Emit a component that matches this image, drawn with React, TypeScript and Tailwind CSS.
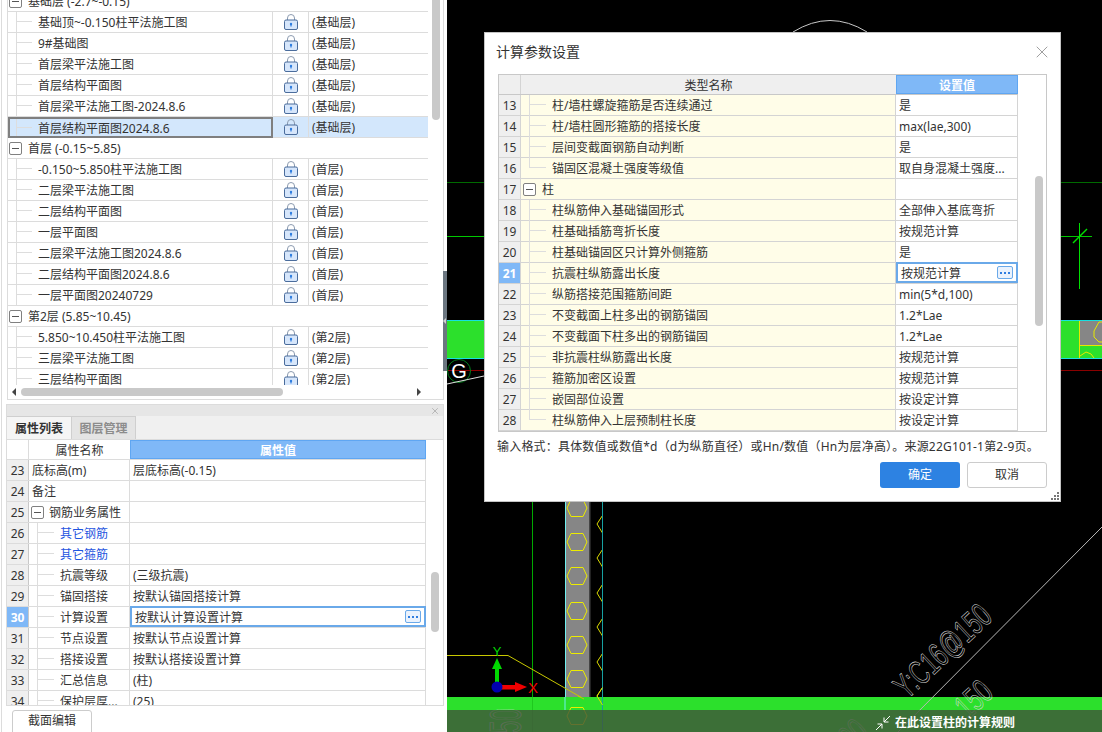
import { X } from 'lucide-react'

const treeRows: { name: string; layer?: string; group?: boolean; selected?: boolean }[] = [
  { name: '基础层 (-2.7~-0.15)', group: true },
  { name: '基础顶~-0.150柱平法施工图', layer: '(基础层)' },
  { name: '9#基础图', layer: '(基础层)' },
  { name: '首层梁平法施工图', layer: '(基础层)' },
  { name: '首层结构平面图', layer: '(基础层)' },
  { name: '首层梁平法施工图-2024.8.6', layer: '(基础层)' },
  { name: '首层结构平面图2024.8.6', layer: '(基础层)', selected: true },
  { name: '首层 (-0.15~5.85)', group: true },
  { name: '-0.150~5.850柱平法施工图', layer: '(首层)' },
  { name: '二层梁平法施工图', layer: '(首层)' },
  { name: '二层结构平面图', layer: '(首层)' },
  { name: '一层平面图', layer: '(首层)' },
  { name: '二层梁平法施工图2024.8.6', layer: '(首层)' },
  { name: '二层结构平面图2024.8.6', layer: '(首层)' },
  { name: '一层平面图20240729', layer: '(首层)' },
  { name: '第2层 (5.85~10.45)', group: true },
  { name: '5.850~10.450柱平法施工图', layer: '(第2层)' },
  { name: '三层梁平法施工图', layer: '(第2层)' },
  { name: '三层结构平面图', layer: '(第2层)' },
]

const propRows: { no: number; name: string; value?: string; kind?: 'plain' | 'group' | 'blue' | 'child' }[] = [
  { no: 23, name: '底标高(m)', value: '层底标高(-0.15)', kind: 'plain' },
  { no: 24, name: '备注', kind: 'plain' },
  { no: 25, name: '钢筋业务属性', kind: 'group' },
  { no: 26, name: '其它钢筋', kind: 'blue' },
  { no: 27, name: '其它箍筋', kind: 'blue' },
  { no: 28, name: '抗震等级', value: '(三级抗震)' },
  { no: 29, name: '锚固搭接', value: '按默认锚固搭接计算' },
  { no: 30, name: '计算设置', value: '按默认计算设置计算' },
  { no: 31, name: '节点设置', value: '按默认节点设置计算' },
  { no: 32, name: '搭接设置', value: '按默认搭接设置计算' },
  { no: 33, name: '汇总信息', value: '(柱)' },
  { no: 34, name: '保护层厚...', value: '(25)' },
]

const paramRows: { no: number; name: string; value?: string; group?: boolean; last?: boolean }[] = [
  { no: 13, name: '柱/墙柱螺旋箍筋是否连续通过', value: '是' },
  { no: 14, name: '柱/墙柱圆形箍筋的搭接长度', value: 'max(lae,300)' },
  { no: 15, name: '层间变截面钢筋自动判断', value: '是' },
  { no: 16, name: '锚固区混凝土强度等级值', value: '取自身混凝土强度...', last: true },
  { no: 17, name: '柱', group: true },
  { no: 18, name: '柱纵筋伸入基础锚固形式', value: '全部伸入基底弯折' },
  { no: 19, name: '柱基础插筋弯折长度', value: '按规范计算' },
  { no: 20, name: '柱基础锚固区只计算外侧箍筋', value: '是' },
  { no: 21, name: '抗震柱纵筋露出长度', value: '按规范计算' },
  { no: 22, name: '纵筋搭接范围箍筋间距', value: 'min(5*d,100)' },
  { no: 23, name: '不变截面上柱多出的钢筋锚固', value: '1.2*Lae' },
  { no: 24, name: '不变截面下柱多出的钢筋锚固', value: '1.2*Lae' },
  { no: 25, name: '非抗震柱纵筋露出长度', value: '按规范计算' },
  { no: 26, name: '箍筋加密区设置', value: '按规范计算' },
  { no: 27, name: '嵌固部位设置', value: '按设定计算' },
  { no: 28, name: '柱纵筋伸入上层预制柱长度', value: '按设定计算', last: true },
]

function LockIcon() {
  return (
    <svg viewBox="0 0 14 16" className="w-[14px] h-[16px]">
      <path d="M3.5 6.5V4a3.5 3.5 0 0 1 7 0v2.5" fill="none" stroke="#8c9bb0" strokeWidth="1" />
      <rect x="0.5" y="6" width="13" height="9.5" rx="1.5" fill="#d6e6fb" stroke="#4a6c9c" />
      <circle cx="7" cy="10" r="1.2" fill="#2f7de0" />
      <rect x="6.4" y="10" width="1.2" height="2.5" fill="#2f7de0" />
    </svg>
  )
}

function MinusBox() {
  return (
    <span className="flex items-center justify-center w-[13px] h-[13px] border border-[#808080] rounded-[2px] bg-white shrink-0">
      <span className="w-[7px] h-px bg-[#555]" />
    </span>
  )
}

function MoreButton() {
  return (
    <span className="flex items-center justify-center gap-[2px] w-[16px] h-[13px] border border-[#6aa9e9] bg-[#eaf2fd] rounded-[2px] shrink-0">
      <span className="w-[2px] h-[2px] bg-[#2f7de0]" />
      <span className="w-[2px] h-[2px] bg-[#2f7de0]" />
      <span className="w-[2px] h-[2px] bg-[#2f7de0]" />
    </span>
  )
}

function Connector({ width, last }: { width: string; last?: boolean }) {
  return (
    <span className={`flex self-stretch shrink-0 ${width}`}>
      <span className={`w-px bg-[#dddddd] ${last ? 'h-1/2' : 'h-full'}`} />
      <span className="flex-1 h-1/2 border-b border-[#dddddd]" />
    </span>
  )
}

function TreeRow({ row }: { row: (typeof treeRows)[number] }) {
  if (row.group) {
    return (
      <div className="flex items-center h-[21px] border-b border-[#dcdcdc] pl-[1px] gap-[6px]">
        <MinusBox />
        <span className="pt-[2px]">{row.name}</span>
      </div>
    )
  }
  return (
    <div className="flex h-[21px] border-b border-[#dcdcdc]">
      <div
        className={`flex items-center w-[265px] shrink-0 ${
          row.selected ? 'pl-[6px] bg-[#d3e7fc] border-2 border-[#7f7f7f] h-[21px]' : 'pl-[8px] border-r border-[#dcdcdc]'
        }`}
      >
        <Connector width="w-[16px]" />
        <span className="ml-[6px] pt-[2px]">{row.name}</span>
      </div>
      <div
        className={`flex items-center justify-center w-[36px] shrink-0 border-r border-[#dcdcdc] ${
          row.selected ? 'bg-[#d3e7fc]' : ''
        }`}
      >
        <LockIcon />
      </div>
      <div className={`flex items-center flex-1 pl-[3px] pt-[2px] ${row.selected ? 'bg-[#d3e7fc]' : ''}`}>{row.layer}</div>
    </div>
  )
}

function TreePanel() {
  return (
    <div className="flex flex-col h-[401px] ml-[5px] border-b border-r border-l border-[#dcdcdc]">
      <div className="flex h-[385px]">
        <div className="w-[420px] overflow-hidden">
          <div className="-mt-[9px]">
            {treeRows.map((row) => (
              <TreeRow key={row.name} row={row} />
            ))}
          </div>
        </div>
        <div className="ml-[4px] w-[8px] h-[120px] bg-[#c9c9c9] rounded-b-[4px]" />
      </div>
      <div className="flex items-center h-[14px]">
        <span className="ml-[4px] w-0 h-0 border-y-[4px] border-y-transparent border-r-[4px] border-r-[#444]" />
        <span className="ml-[5px] w-[262px] h-[8px] bg-[#c9c9c9] rounded-[4px]" />
        <span className="ml-[134px] w-0 h-0 border-y-[4px] border-y-transparent border-l-[4px] border-l-[#444]" />
      </div>
    </div>
  )
}

function PropRow({ row }: { row: (typeof propRows)[number] }) {
  const active = row.no === 30
  return (
    <div className="flex h-[21px] border-b border-[#dcdcdc]">
      <div
        className={`flex items-center justify-center w-[22px] shrink-0 pt-[2px] border-r border-[#c8c8c8] ${
          active ? 'bg-[#7fb8f7] text-white font-bold' : 'bg-[#efefef]'
        }`}
      >
        {row.no}
      </div>
      <div className="flex items-center w-[101px] shrink-0 border-r border-[#dcdcdc]">
        {row.kind === 'plain' && <span className="ml-[3px] pt-[2px]">{row.name}</span>}
        {row.kind === 'group' && (
          <>
            <span className="ml-[2px]">
              <MinusBox />
            </span>
            <span className="ml-[5px] pt-[2px]">{row.name}</span>
          </>
        )}
        {(row.kind === 'blue' || !row.kind) && (
          <>
            <span className="ml-[8px]">
              <span className="block h-[21px]">
                <Connector width="w-[17px] h-[21px]" />
              </span>
            </span>
            <span className={`ml-[6px] pt-[2px] ${row.kind === 'blue' ? 'text-[#1f55e0]' : ''}`}>{row.name}</span>
          </>
        )}
      </div>
      {active ? (
        <div className="flex items-center flex-1 pl-[3px] pr-[3px] border-2 border-[#6aa9e9] -mt-px">
          <span className="flex-1 pt-[2px]">{row.value}</span>
          <MoreButton />
        </div>
      ) : (
        <div className="flex items-center flex-1 pl-[3px] pt-[2px] border-r border-[#dcdcdc]">{row.value}</div>
      )}
    </div>
  )
}

function PropPanel() {
  return (
    <div className="mt-[4px] h-[302px] border border-[#dcdcdc] overflow-hidden">
      <div className="flex items-center justify-end h-[11px] pr-[3px] bg-[#e6e6e6]">
        <X className="w-[10px] h-[10px] text-[#9a9a9a]" strokeWidth={1.5} />
      </div>
      <div className="flex h-[24px] bg-[#f0f0f0] border-b border-[#dcdcdc]">
        <div className="flex items-center justify-center w-[65px] pt-[2px] bg-[#f5f5f5] border-t border-r border-[#cfcfcf] font-bold">属性列表</div>
        <div className="flex items-center justify-center w-[64px] pt-[2px] bg-[#e4e4e4] border-t border-r border-[#cfcfcf] font-bold text-[#8c8c8c]">图层管理</div>
      </div>
      <div className="flex w-[419px] h-[20px] border-b border-[#dcdcdc]">
        <div className="w-[22px] border-r border-[#dcdcdc]" />
        <div className="flex items-center justify-center w-[101px] pt-[2px]">属性名称</div>
        <div className="flex items-center justify-center flex-1 pt-[2px] bg-[#7fb8f7] border border-[#5fa6f2] text-white font-bold">属性值</div>
      </div>
      <div className="flex">
        <div className="w-[419px] shrink-0">
          {propRows.map((row) => (
            <PropRow key={row.no} row={row} />
          ))}
        </div>
        <div className="ml-[5px] mt-[112px] w-[8px] h-[60px] bg-[#c9c9c9] rounded-[4px]" />
      </div>
    </div>
  )
}

function ParamRow({ row }: { row: (typeof paramRows)[number] }) {
  const active = row.no === 21
  return (
    <div className="flex h-[21px] border-b border-[#d4d4d4]">
      <div
        className={`flex items-center justify-center w-[22px] shrink-0 pt-[2px] border-r border-[#d4d4d4] ${
          active ? 'bg-[#7fb8f7] text-white font-bold' : 'bg-[#efefef]'
        }`}
      >
        {row.no}
      </div>
      <div className="flex items-center w-[375px] shrink-0 bg-[#fffde8] border-r border-[#d4d4d4]">
        {row.group ? (
          <>
            <span className="ml-[2px]">
              <MinusBox />
            </span>
            <span className="ml-[6px] pt-[2px]">{row.name}</span>
          </>
        ) : (
          <>
            <span className="ml-[8px] h-[21px] flex">
              <Connector width="w-[17px]" last={row.last} />
            </span>
            <span className="ml-[6px] pt-[2px]">{row.name}</span>
          </>
        )}
      </div>
      {active ? (
        <div className="flex items-center flex-1 pl-[3px] pr-[3px] border-2 border-[#6aa9e9] -mt-px">
          <span className="flex-1 pt-[2px]">{row.value}</span>
          <MoreButton />
        </div>
      ) : (
        <div className="flex items-center flex-1 pl-[3px] pt-[2px] border-r border-[#d4d4d4]">{row.value}</div>
      )}
    </div>
  )
}

function ParamDialog() {
  return (
    <div className="absolute left-[37px] top-[32px] w-[577px] h-[470px] flex flex-col bg-white border border-[#c4c4c4] px-[13px]">
      <div className="flex items-center justify-between h-[41px] pb-[4px] -ml-[2px]">
        <span className="text-[14px]">计算参数设置</span>
        <X className="w-[20px] h-[20px] -mr-[5px] text-[#8c8c8c]" strokeWidth={1} />
      </div>
      <div className="flex h-[358px] w-[549px] border border-[#c8c8c8]">
        <div className="w-[519px] shrink-0">
          <div className="flex h-[20px] border-b border-[#c8c8c8] bg-[#efefef]">
            <div className="w-[22px] border-r border-[#d4d4d4]" />
            <div className="flex items-center justify-center w-[375px] pt-[2px]">类型名称</div>
            <div className="flex items-center justify-center flex-1 pt-[2px] bg-[#7fb8f7] border border-[#5fa6f2] text-white font-bold">设置值</div>
          </div>
          {paramRows.map((row) => (
            <ParamRow key={row.no} row={row} />
          ))}
        </div>
        <div className="ml-[17px] mt-[101px] w-[8px] h-[150px] bg-[#c9c9c9] rounded-[4px]" />
      </div>
      <div className="mt-[5px] h-[20px] flex items-center whitespace-nowrap -ml-[1px] tracking-[0.19px]">
        输入格式：具体数值或数值*d（d为纵筋直径）或Hn/数值（Hn为层净高）。来源22G101-1第2-9页。
      </div>
      <div className="flex justify-end gap-[7px] mt-[5px]">
        <button className="w-[80px] h-[26px] rounded-[3px] bg-[#2d82e2] text-white">确定</button>
        <button className="w-[80px] h-[26px] rounded-[3px] bg-white border border-[#cccccc]">取消</button>
      </div>
      <svg viewBox="0 0 9 9" className="absolute right-[1px] bottom-[1px] w-[9px] h-[9px]" fill="#777777">
        <rect x="7" y="1" width="2" height="2" />
        <rect x="4" y="4" width="2" height="2" />
        <rect x="7" y="4" width="2" height="2" />
        <rect x="1" y="7" width="2" height="2" />
        <rect x="4" y="7" width="2" height="2" />
        <rect x="7" y="7" width="2" height="2" />
      </svg>
    </div>
  )
}

const hexCenters = [508, 542, 576, 611, 645, 679, 716]
const chevrons = [524, 558, 593, 627, 662, 696]
const cadText = { fontFamily: 'Liberation Sans', fontSize: 22, fill: 'none' }

function hexPoints(cx: number, cy: number) {
  return `${cx - 10},${cy} ${cx - 6},${cy - 8.5} ${cx + 6},${cy - 8.5} ${cx + 10},${cy} ${cx + 6},${cy + 8.5} ${cx - 6},${cy + 8.5}`
}

// the CAD drawing behind the dialog
function CadDrawing() {
  return (
    <svg viewBox="447 0 655 732" className="block w-full h-full">
      <rect x="447" y="0" width="655" height="732" fill="#000000" />
      <path d="M793 32Q830 9 867 32" fill="none" stroke="#c8c8c8" />
      <line x1="447" y1="182.5" x2="1102" y2="182.5" stroke="#006a00" />
      <line x1="447" y1="236.5" x2="1092" y2="236.5" stroke="#00c800" />
      <line x1="1079.5" y1="223" x2="1079.5" y2="289" stroke="#00e000" />
      <line x1="1073" y1="243" x2="1087" y2="229" stroke="#00e000" strokeWidth="1.5" />
      <rect x="447" y="320" width="655" height="38.5" fill="#2ce02c" />
      <rect x="1079.5" y="321" width="22.5" height="24" fill="#868686" />
      <line x1="447" y1="320.5" x2="1102" y2="320.5" stroke="#16e0e0" />
      <line x1="447" y1="358.5" x2="1102" y2="358.5" stroke="#16e0e0" />
      <line x1="1079.5" y1="321" x2="1079.5" y2="358" stroke="#e8e800" />
      <line x1="1079.5" y1="345.5" x2="1102" y2="345.5" stroke="#e8e800" />
      <path d="M1102 322H1099L1094 331V337L1099 342H1102" fill="none" stroke="#e8e800" />
      <path d="M1080 356L1086 352L1091 354L1094 358" fill="none" stroke="#e8e800" />
      <line x1="447" y1="370.5" x2="1102" y2="370.5" stroke="#8a0000" />
      <circle cx="459" cy="371" r="11.5" fill="none" stroke="#00801a" />
      <text x="459" y="378" textAnchor="middle" fontFamily="Liberation Sans" fontSize="20" fill="#ffffff">G</text>
      <line x1="447" y1="384" x2="484" y2="376" stroke="#e0e0e0" />

      <line x1="532.5" y1="500" x2="532.5" y2="732" stroke="#00a800" />
      <rect x="566" y="500" width="24" height="197" fill="#868686" />
      <rect x="589" y="500" width="1.5" height="197" fill="#444444" />
      <line x1="565.5" y1="500" x2="565.5" y2="732" stroke="#6ff0f0" />
      {hexCenters.map((cy) => (
        <polygon key={cy} points={hexPoints(577, cy)} fill="none" stroke="#ecec00" />
      ))}
      {chevrons.map((cy) => (
        <polyline key={cy} points={`602.5,${cy - 8.5} 597,${cy} 602.5,${cy + 9}`} fill="none" stroke="#dcdc00" />
      ))}
      <polyline points="447,655.5 508,655.5 584,699" fill="none" stroke="#c8c800" />
      <rect x="447" y="697" width="655" height="35" fill="#2ce02c" />
      <line x1="602.5" y1="500" x2="602.5" y2="732" stroke="#17a0a0" />
      <polyline points="565,710 565,697" stroke="#6ff0f0" fill="none" />
      <line x1="532.5" y1="697" x2="532.5" y2="732" stroke="#1fc81f" />
      <polyline points="584,699 578,696" fill="none" stroke="#c8c800" />
      <polygon points={hexPoints(577, 716)} fill="none" stroke="#ecec00" />
      <polyline points="602.5,687.5 597,696 602.5,705" fill="none" stroke="#dcdc00" />

      <rect x="495" y="668" width="4" height="16" fill="#00d800" />
      <polygon points="497,658 502,669 492,669" fill="#00d800" />
      <text x="497" y="656" textAnchor="middle" fontFamily="Liberation Sans" fontSize="13" fill="#00d800">Y</text>
      <rect x="500" y="685" width="16" height="4.5" fill="#f00000" />
      <polygon points="527,687 515,682 515,692" fill="#f00000" />
      <circle cx="497" cy="687" r="5.5" fill="#0000b0" />
      <text x="533" y="693" textAnchor="middle" fontFamily="Liberation Sans" fontSize="15" fill="#f00000">X</text>

      <line x1="1102" y1="527" x2="898" y2="732" stroke="#b8b8b8" />
      <g stroke="#d8d8d8" strokeWidth="0.4" style={cadText}>
        <text transform="translate(907 700) rotate(-43) scale(1 1.55)">Y:C16@150</text>
        <text transform="translate(968 720) rotate(-43) scale(1 1.55)">150</text>
        <text transform="translate(843 759) rotate(-43) scale(1 1.55)">100</text>
        <text transform="translate(521 733) rotate(-90) scale(1 2)">50</text>
      </g>
    </svg>
  )
}

export default function App() {
  return (
    <div className="flex w-[1102px] h-[732px] overflow-hidden bg-white text-[12px] leading-[20px] text-[#333333] font-['Noto_Sans','Noto_Sans_CJK_SC',sans-serif]">
      <div className="flex flex-col w-[443px] h-[732px] shrink-0 ml-px border-l border-[#dcdcdc] -mr-px">
        <TreePanel />
        <div className="ml-[4px]">
          <PropPanel />
        </div>
        <button className="mt-[4px] ml-[10px] w-[80px] h-[30px] pb-[8px] shrink-0 bg-white border border-[#cccccc] rounded-t-[3px]">
          截面编辑
        </button>
      </div>
      <div className="w-[4px] shrink-0">
        <div className="flex items-center mt-[271px] h-[100px] bg-[#6b7680]">
          <span className="w-0 h-0 border-y-[3px] border-y-transparent border-r-[3px] border-r-[#d0d0d0]" />
        </div>
      </div>
      <div className="relative flex-1 h-[732px]">
        <CadDrawing />
        <ParamDialog />
        <div className="absolute left-0 right-0 bottom-0 flex items-center h-[22px] pl-[428px] pt-[3px] gap-[4px] bg-[#41523b]/80 text-white font-bold">
          <svg viewBox="0 0 16 16" className="w-[16px] h-[16px]" fill="none" stroke="#ffffff" strokeWidth="1">
            <path d="M15 1L9 7M9 2.5V7H13.5" />
            <path d="M1 15L7 9M7 13.5V9H2.5" />
          </svg>
          <span>在此设置柱的计算规则</span>
        </div>
      </div>
    </div>
  )
}
